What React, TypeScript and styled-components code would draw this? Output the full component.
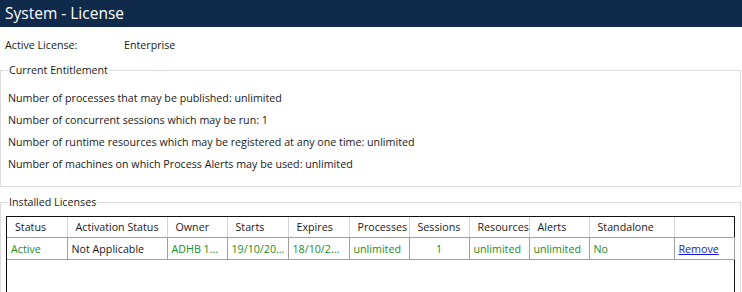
import React from "react";
import styled, { createGlobalStyle } from "styled-components";

const GlobalStyle = createGlobalStyle`
   html, body {
      margin: 0;
      padding: 0;
      background: #ffffff;
   }
   body {
      font-family: "Open Sans", "Noto Sans", sans-serif;
      font-size: 10.7px;
      color: #1a1a1a;
   }
`;

interface LicenseRow {
   status: string;
   activation: string;
   owner: string;
   starts: string;
   expires: string;
   processes: string;
   sessions: string;
   resources: string;
   alerts: string;
   standalone: string;
}

const columns: { label: string; width: number }[] = [
   { label: "Status", width: 60 },
   { label: "Activation Status", width: 100 },
   { label: "Owner", width: 60 },
   { label: "Starts", width: 61 },
   { label: "Expires", width: 61 },
   { label: "Processes", width: 60 },
   { label: "Sessions", width: 60 },
   { label: "Resources", width: 60 },
   { label: "Alerts", width: 60 },
   { label: "Standalone", width: 85 },
   { label: "", width: 60 },
];

const licenses: LicenseRow[] = [
   {
      status: "Active",
      activation: "Not Applicable",
      owner: "ADHB 1...",
      starts: "19/10/20...",
      expires: "18/10/2...",
      processes: "unlimited",
      sessions: "1",
      resources: "unlimited",
      alerts: "unlimited",
      standalone: "No",
   },
];

const entitlements = [
   "Number of processes that may be published: unlimited",
   "Number of concurrent sessions which may be run: 1",
   "Number of runtime resources which may be registered at any one time: unlimited",
   "Number of machines on which Process Alerts may be used: unlimited",
];

const App: React.FC = () => {
   return (
      <>
         <GlobalStyle />
         <Page>
            <TitleBar>System - License</TitleBar>

            <ActiveRow>
               <span>Active License:</span>
               <span>Enterprise</span>
            </ActiveRow>

            <Group>
               <Legend>Current Entitlement</Legend>
               <EntitlementList>
                  {entitlements.map((line) => (
                     <EntitlementLine key={line}>{line}</EntitlementLine>
                  ))}
               </EntitlementList>
            </Group>

            <Group $open>
               <Legend>Installed Licenses</Legend>
               <TableFrame>
                  <Grid>
                     <colgroup>
                        {columns.map((c, i) => (
                           <col key={i} style={{ width: c.width }} />
                        ))}
                     </colgroup>
                     <thead>
                        <tr>
                           {columns.map((c, i) => (
                              <HeadCell key={i}>{c.label}</HeadCell>
                           ))}
                        </tr>
                     </thead>
                     <tbody>
                        {licenses.map((l, i) => (
                           <tr key={i}>
                              <Cell $green>{l.status}</Cell>
                              <Cell>{l.activation}</Cell>
                              <Cell $green>{l.owner}</Cell>
                              <Cell $green>{l.starts}</Cell>
                              <Cell $green>{l.expires}</Cell>
                              <Cell $green>{l.processes}</Cell>
                              <Cell $green $center>{l.sessions}</Cell>
                              <Cell $green>{l.resources}</Cell>
                              <Cell $green>{l.alerts}</Cell>
                              <Cell $green>{l.standalone}</Cell>
                              <Cell>
                                 <RemoveLink href="#">Remove</RemoveLink>
                              </Cell>
                           </tr>
                        ))}
                     </tbody>
                  </Grid>
               </TableFrame>
            </Group>
         </Page>
      </>
   );
};

export default App;

const Page = styled.div`
   width: 742px;
   height: 292px;
   overflow: hidden;
   display: flex;
   flex-direction: column;
`;

const TitleBar = styled.div`
   height: 28px;
   background-color: #0f2a4a;
   color: #ffffff;
   font-size: 15.5px;
   line-height: 27px;
   padding-left: 5px;
`;

const ActiveRow = styled.div`
   display: grid;
   grid-template-columns: 119px auto;
   padding: 10px 5px 0;
   height: 16px;
   line-height: 16px;
`;

const Group = styled.fieldset<{ $open?: boolean }>`
   margin: ${(p) => (p.$open ? "8px 1px 0 0" : "10px 1px 0 0")};
   padding: 0 0 0 5px;
   border: 1px solid #dcdcdc;
   border-bottom: ${(p) => (p.$open ? "none" : "1px solid #dcdcdc")};
   flex: ${(p) => (p.$open ? "1" : "none")};
   min-width: 0;
`;

const Legend = styled.legend`
   margin-left: 2px;
   padding: 0 1px;
   line-height: 14px;
`;

const EntitlementList = styled.div`
   display: flex;
   flex-direction: column;
   gap: 6px;
   padding: 13px 0 14px 2px;
`;

const EntitlementLine = styled.div`
   height: 16px;
   line-height: 16px;
`;

const TableFrame = styled.div`
   margin: 7px 5px 0 0;
   border: 1px solid #111111;
   border-bottom: none;
   height: 100px;
`;

const Grid = styled.table`
   border-collapse: collapse;
   table-layout: fixed;
   width: 100%;
`;

const HeadCell = styled.th`
   height: 20px;
   padding: 0 0 0 8px;
   text-align: left;
   font-weight: normal;
   white-space: nowrap;
   overflow: hidden;
   border-left: 1px solid #d4d4d4;
   border-bottom: 1px solid #a0a0a0;
   &:first-child {
      border-left: none;
   }
`;

const Cell = styled.td<{ $green?: boolean; $center?: boolean }>`
   height: 21px;
   padding: 0 0 0 ${(p) => (p.$center ? "0" : "4px")};
   text-align: ${(p) => (p.$center ? "center" : "left")};
   color: ${(p) => (p.$green ? "#228b22" : "#1a1a1a")};
   white-space: nowrap;
   overflow: hidden;
   border: 1px solid #a0a0a0;
   border-top: none;
   &:first-child {
      border-left: none;
   }
`;

const RemoveLink = styled.a`
   color: #1515e0;
   text-decoration: underline;
`;
